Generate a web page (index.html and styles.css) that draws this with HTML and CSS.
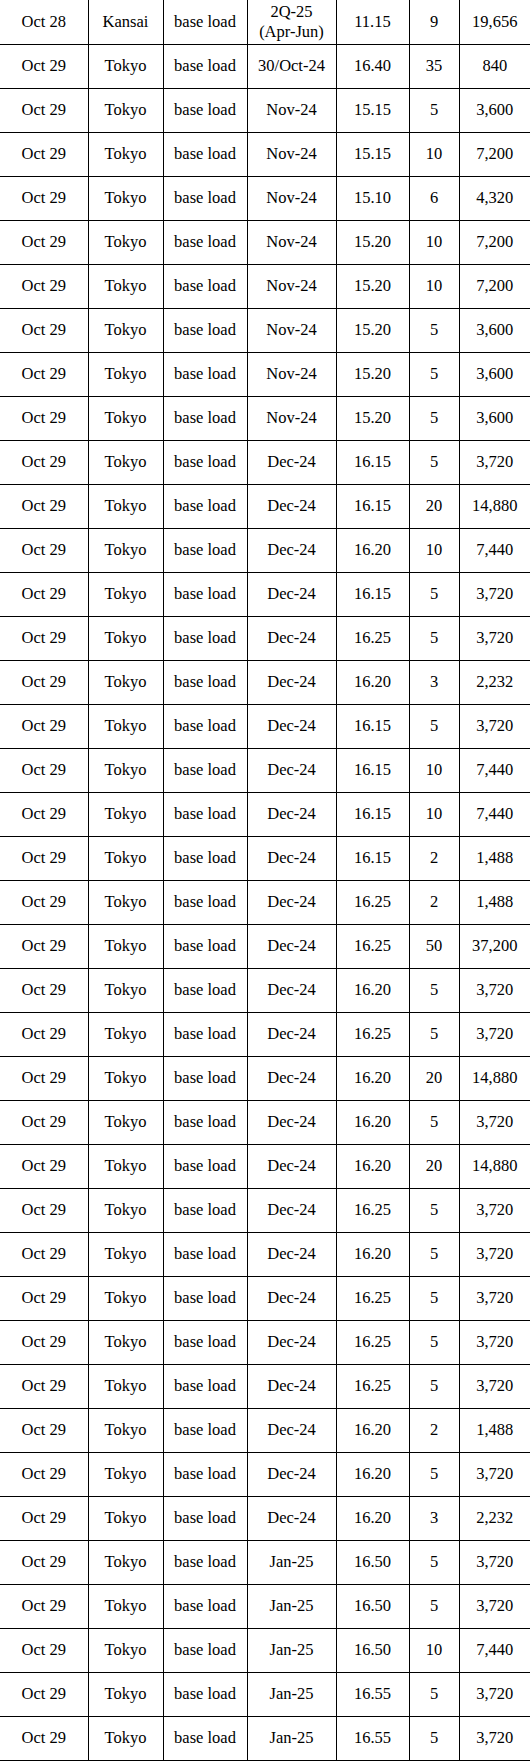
FILE: index.html
```html
<!DOCTYPE html>
<html lang="en">
<head>
<meta charset="utf-8">
<title>Trades</title>
<link rel="stylesheet" href="styles.css">
</head>
<body>
<table class="trades">
<colgroup>
<col class="c-date"><col class="c-area"><col class="c-type"><col class="c-period"><col class="c-price"><col class="c-vol"><col class="c-total">
</colgroup>
<tbody>
<tr><td>Oct 28</td><td>Kansai</td><td>base load</td><td>2Q-25<br>(Apr-Jun)</td><td>11.15</td><td>9</td><td>19,656</td></tr>
<tr><td>Oct 29</td><td>Tokyo</td><td>base load</td><td>30/Oct-24</td><td>16.40</td><td>35</td><td>840</td></tr>
<tr><td>Oct 29</td><td>Tokyo</td><td>base load</td><td>Nov-24</td><td>15.15</td><td>5</td><td>3,600</td></tr>
<tr><td>Oct 29</td><td>Tokyo</td><td>base load</td><td>Nov-24</td><td>15.15</td><td>10</td><td>7,200</td></tr>
<tr><td>Oct 29</td><td>Tokyo</td><td>base load</td><td>Nov-24</td><td>15.10</td><td>6</td><td>4,320</td></tr>
<tr><td>Oct 29</td><td>Tokyo</td><td>base load</td><td>Nov-24</td><td>15.20</td><td>10</td><td>7,200</td></tr>
<tr><td>Oct 29</td><td>Tokyo</td><td>base load</td><td>Nov-24</td><td>15.20</td><td>10</td><td>7,200</td></tr>
<tr><td>Oct 29</td><td>Tokyo</td><td>base load</td><td>Nov-24</td><td>15.20</td><td>5</td><td>3,600</td></tr>
<tr><td>Oct 29</td><td>Tokyo</td><td>base load</td><td>Nov-24</td><td>15.20</td><td>5</td><td>3,600</td></tr>
<tr><td>Oct 29</td><td>Tokyo</td><td>base load</td><td>Nov-24</td><td>15.20</td><td>5</td><td>3,600</td></tr>
<tr><td>Oct 29</td><td>Tokyo</td><td>base load</td><td>Dec-24</td><td>16.15</td><td>5</td><td>3,720</td></tr>
<tr><td>Oct 29</td><td>Tokyo</td><td>base load</td><td>Dec-24</td><td>16.15</td><td>20</td><td>14,880</td></tr>
<tr><td>Oct 29</td><td>Tokyo</td><td>base load</td><td>Dec-24</td><td>16.20</td><td>10</td><td>7,440</td></tr>
<tr><td>Oct 29</td><td>Tokyo</td><td>base load</td><td>Dec-24</td><td>16.15</td><td>5</td><td>3,720</td></tr>
<tr><td>Oct 29</td><td>Tokyo</td><td>base load</td><td>Dec-24</td><td>16.25</td><td>5</td><td>3,720</td></tr>
<tr><td>Oct 29</td><td>Tokyo</td><td>base load</td><td>Dec-24</td><td>16.20</td><td>3</td><td>2,232</td></tr>
<tr><td>Oct 29</td><td>Tokyo</td><td>base load</td><td>Dec-24</td><td>16.15</td><td>5</td><td>3,720</td></tr>
<tr><td>Oct 29</td><td>Tokyo</td><td>base load</td><td>Dec-24</td><td>16.15</td><td>10</td><td>7,440</td></tr>
<tr><td>Oct 29</td><td>Tokyo</td><td>base load</td><td>Dec-24</td><td>16.15</td><td>10</td><td>7,440</td></tr>
<tr><td>Oct 29</td><td>Tokyo</td><td>base load</td><td>Dec-24</td><td>16.15</td><td>2</td><td>1,488</td></tr>
<tr><td>Oct 29</td><td>Tokyo</td><td>base load</td><td>Dec-24</td><td>16.25</td><td>2</td><td>1,488</td></tr>
<tr><td>Oct 29</td><td>Tokyo</td><td>base load</td><td>Dec-24</td><td>16.25</td><td>50</td><td>37,200</td></tr>
<tr><td>Oct 29</td><td>Tokyo</td><td>base load</td><td>Dec-24</td><td>16.20</td><td>5</td><td>3,720</td></tr>
<tr><td>Oct 29</td><td>Tokyo</td><td>base load</td><td>Dec-24</td><td>16.25</td><td>5</td><td>3,720</td></tr>
<tr><td>Oct 29</td><td>Tokyo</td><td>base load</td><td>Dec-24</td><td>16.20</td><td>20</td><td>14,880</td></tr>
<tr><td>Oct 29</td><td>Tokyo</td><td>base load</td><td>Dec-24</td><td>16.20</td><td>5</td><td>3,720</td></tr>
<tr><td>Oct 29</td><td>Tokyo</td><td>base load</td><td>Dec-24</td><td>16.20</td><td>20</td><td>14,880</td></tr>
<tr><td>Oct 29</td><td>Tokyo</td><td>base load</td><td>Dec-24</td><td>16.25</td><td>5</td><td>3,720</td></tr>
<tr><td>Oct 29</td><td>Tokyo</td><td>base load</td><td>Dec-24</td><td>16.20</td><td>5</td><td>3,720</td></tr>
<tr><td>Oct 29</td><td>Tokyo</td><td>base load</td><td>Dec-24</td><td>16.25</td><td>5</td><td>3,720</td></tr>
<tr><td>Oct 29</td><td>Tokyo</td><td>base load</td><td>Dec-24</td><td>16.25</td><td>5</td><td>3,720</td></tr>
<tr><td>Oct 29</td><td>Tokyo</td><td>base load</td><td>Dec-24</td><td>16.25</td><td>5</td><td>3,720</td></tr>
<tr><td>Oct 29</td><td>Tokyo</td><td>base load</td><td>Dec-24</td><td>16.20</td><td>2</td><td>1,488</td></tr>
<tr><td>Oct 29</td><td>Tokyo</td><td>base load</td><td>Dec-24</td><td>16.20</td><td>5</td><td>3,720</td></tr>
<tr><td>Oct 29</td><td>Tokyo</td><td>base load</td><td>Dec-24</td><td>16.20</td><td>3</td><td>2,232</td></tr>
<tr><td>Oct 29</td><td>Tokyo</td><td>base load</td><td>Jan-25</td><td>16.50</td><td>5</td><td>3,720</td></tr>
<tr><td>Oct 29</td><td>Tokyo</td><td>base load</td><td>Jan-25</td><td>16.50</td><td>5</td><td>3,720</td></tr>
<tr><td>Oct 29</td><td>Tokyo</td><td>base load</td><td>Jan-25</td><td>16.50</td><td>10</td><td>7,440</td></tr>
<tr><td>Oct 29</td><td>Tokyo</td><td>base load</td><td>Jan-25</td><td>16.55</td><td>5</td><td>3,720</td></tr>
<tr><td>Oct 29</td><td>Tokyo</td><td>base load</td><td>Jan-25</td><td>16.55</td><td>5</td><td>3,720</td></tr>
</tbody>
</table>
</body>
</html>
```

FILE: styles.css
```css
html, body {
  margin: 0;
  padding: 0;
  background: #ffffff;
}

.trades {
  width: 530px;
  table-layout: fixed;
  border-collapse: collapse;
  border: 1px solid #000;
  border-top-style: hidden;
  border-left-style: hidden;
  border-right-style: hidden;
  font-family: "Liberation Serif", "Times New Roman", serif;
  font-size: 16.5px;
  line-height: 20px;
  color: #000;
}

.trades tr {
  height: 44px;
}

.trades td {
  border: 1px solid #000;
  padding: 0;
  text-align: center;
  vertical-align: middle;
  white-space: nowrap;
}

.c-date { width: 88px; }
.c-area { width: 75px; }
.c-type { width: 84px; }
.c-period { width: 89px; }
.c-price { width: 73px; }
.c-vol { width: 50px; }
.c-total { width: 71px; }
```
